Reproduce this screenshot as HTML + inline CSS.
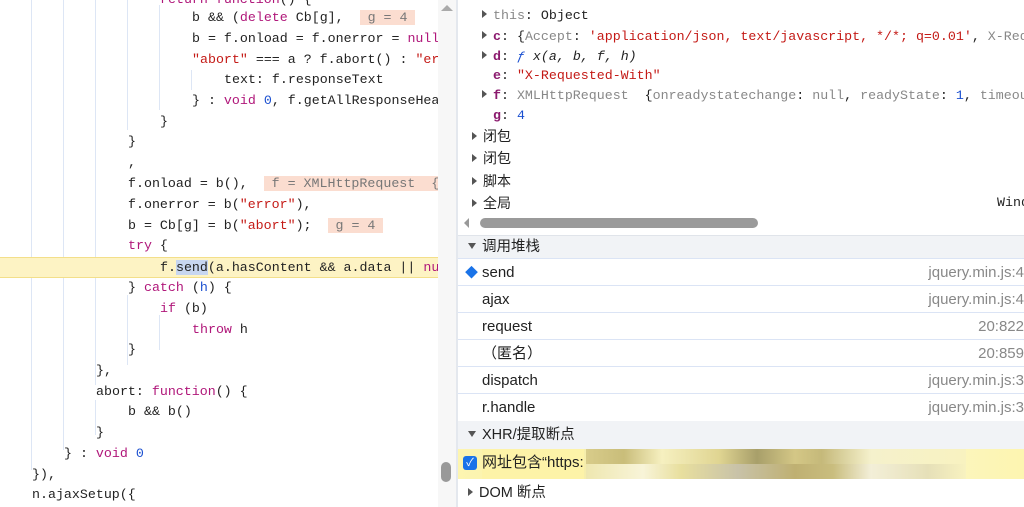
<!DOCTYPE html><html><head><meta charset="utf-8"><style>
*{margin:0;padding:0;box-sizing:border-box}
body{width:1024px;height:507px;overflow:hidden;background:#fff;position:relative;font-family:"Liberation Sans","Noto Sans CJK SC",sans-serif}
#code{position:absolute;left:0;top:0;width:438px;height:507px;overflow:hidden;font-family:"Liberation Mono","Noto Sans CJK SC",monospace;font-size:13.3px;color:#222}
.l{position:absolute;left:0;height:20.7px;line-height:20.7px;white-space:pre;width:438px}
.g{position:absolute;width:1px;background:#dde6f5}
.k{color:#b0177a}.s{color:#c41a16}.n{color:#1a4fd0}
.hl{background:#fbddd0;color:#777}
#gut{position:absolute;left:438px;top:0;width:18px;height:507px;background:#f7f7f7}
#div{position:absolute;left:456px;top:0;width:2px;height:507px;background:#e4e8ee}
#r{position:absolute;left:458px;top:0;width:566px;height:507px;font-size:14px;color:#222}
.sc{position:absolute;white-space:pre;font-family:"Liberation Mono","Noto Sans CJK SC",monospace;font-size:13.3px;line-height:20px}
.tri{display:inline-block;width:0;height:0;border-top:4px solid transparent;border-bottom:4px solid transparent;border-left:5px solid #555;margin-right:6px;vertical-align:1px}
.trd{display:inline-block;width:0;height:0;border-left:4px solid transparent;border-right:4px solid transparent;border-top:6px solid #555;margin-right:6px;vertical-align:2px}
.p{color:#8b1a6e;font-weight:bold}.gr{color:#888}
.row{position:absolute;left:0;width:566px;height:27px;line-height:28px;border-bottom:1px solid #dbe4f5;padding-left:24px;font-size:15px}
.row .f{position:absolute;right:0;color:#888}
.hdr{position:absolute;left:0;width:566px;background:#f1f3f6;padding-left:10px;font-size:14.5px}
</style></head><body>
<div id="code">
<div class="g" style="left:31px;top:0;height:470px"></div>
<div class="g" style="left:63px;top:0;height:450px"></div>
<div class="g" style="left:95px;top:0;height:385px"></div>
<div class="g" style="left:95px;top:400px;height:35px"></div>
<div class="g" style="left:127px;top:0;height:130px"></div>
<div class="g" style="left:127px;top:295px;height:70px"></div>
<div class="g" style="left:159px;top:5px;height:105px"></div>
<div class="g" style="left:159px;top:315px;height:35px"></div>
<div class="g" style="left:191px;top:70px;height:20px"></div>
<div class="l" style="top:-10px;left:160px"><span class="k">return function</span>() {</div>
<div class="l" style="top:8px;left:192px">b &amp;&amp; (<span class="k">delete</span> Cb[g],  <span class="hl"> g = 4 </span></div>
<div class="l" style="top:29px;left:192px">b = f.onload = f.onerror = <span class="k">null</span></div>
<div class="l" style="top:50px;left:192px"><span class="s">"abort"</span> === a ? f.abort() : <span class="s">"er</span></div>
<div class="l" style="top:70px;left:224px">text: f.responseText</div>
<div class="l" style="top:91px;left:192px">} : <span class="k">void</span> <span class="n">0</span>, f.getAllResponseHea</div>
<div class="l" style="top:112px;left:160px">}</div>
<div class="l" style="top:132px;left:128px">}</div>
<div class="l" style="top:153px;left:128px">,</div>
<div class="l" style="top:174px;left:128px">f.onload = b(),  <span class="hl"> f = XMLHttpRequest  {o</span></div>
<div class="l" style="top:195px;left:128px">f.onerror = b(<span class="s">"error"</span>),</div>
<div class="l" style="top:216px;left:128px">b = Cb[g] = b(<span class="s">"abort"</span>);  <span class="hl"> g = 4 </span></div>
<div class="l" style="top:236px;left:128px"><span class="k">try</span> {</div>
<div class="l" style="top:257px;left:0;background:#fdf3c4;border-top:1px solid #f3df8a;border-bottom:1px solid #f3df8a;padding-left:160px">f.<span style="background:#c7d6f0">send</span>(a.hasContent &amp;&amp; a.data || <span class="k">nu</span></div>
<div class="l" style="top:278px;left:128px">} <span class="k">catch</span> (<span class="n">h</span>) {</div>
<div class="l" style="top:299px;left:160px"><span class="k">if</span> (b)</div>
<div class="l" style="top:320px;left:192px"><span class="k">throw</span> h</div>
<div class="l" style="top:340px;left:128px">}</div>
<div class="l" style="top:361px;left:96px">},</div>
<div class="l" style="top:382px;left:96px">abort: <span class="k">function</span>() {</div>
<div class="l" style="top:402px;left:128px">b &amp;&amp; b()</div>
<div class="l" style="top:423px;left:96px">}</div>
<div class="l" style="top:444px;left:64px">} : <span class="k">void</span> <span class="n">0</span></div>
<div class="l" style="top:465px;left:32px">}),</div>
<div class="l" style="top:485px;left:32px">n.ajaxSetup({</div>
</div>
<div id="gut">
<div style="position:absolute;left:3px;top:5px;width:0;height:0;border-left:6px solid transparent;border-right:6px solid transparent;border-bottom:6px solid #aaa"></div>
<div style="position:absolute;left:3px;top:462px;width:10px;height:20px;border-radius:5px;background:#999"></div>
</div>
<div id="div"></div>
<div id="r">
<div class="sc" style="left:24px;top:6px"><span class="tri"></span><span class="gr">this</span>: Object</div>
<div class="sc" style="left:24px;top:27px"><span class="tri"></span><span class="p">c</span>: {<span class="gr">Accept</span>: <span class="s">'application/json, text/javascript, */*; q=0.01'</span>, <span class="gr">X-Req</span></div>
<div class="sc" style="left:24px;top:47px"><span class="tri"></span><span class="p">d</span>: <i><span class="n">ƒ</span> x(a, b, f, h)</i></div>
<div class="sc" style="left:35px;top:66px"><span class="p">e</span>: <span class="s">"X-Requested-With"</span></div>
<div class="sc" style="left:24px;top:86px"><span class="tri"></span><span class="p">f</span>: <span class="gr">XMLHttpRequest  </span>{<span class="gr">onreadystatechange</span>: <span class="gr">null</span>, <span class="gr">readyState</span>: <span class="n">1</span>, <span class="gr">timeou</span></div>
<div class="sc" style="left:35px;top:106px"><span class="p">g</span>: <span class="n">4</span></div>
<div class="sc" style="left:14px;top:126px;font-family:'Noto Sans CJK SC',sans-serif;font-size:14px"><span class="tri"></span>闭包</div>
<div class="sc" style="left:14px;top:148px;font-family:'Noto Sans CJK SC',sans-serif;font-size:14px"><span class="tri"></span>闭包</div>
<div class="sc" style="left:14px;top:171px;font-family:'Noto Sans CJK SC',sans-serif;font-size:14px"><span class="tri"></span>脚本</div>
<div class="sc" style="left:14px;top:193px;font-family:'Noto Sans CJK SC',sans-serif;font-size:14px"><span class="tri"></span>全局</div>
<div class="sc" style="left:539px;top:193px">Wind</div>
<div style="position:absolute;left:6px;top:218px;width:0;height:0;border-top:5px solid transparent;border-bottom:5px solid transparent;border-right:5px solid #999"></div>
<div style="position:absolute;left:22px;top:218px;width:278px;height:10px;border-radius:5px;background:#9a9a9a"></div>
<div class="hdr" style="top:235px;height:24px;line-height:23px;border-top:1px solid #e0e4ea;border-bottom:1px solid #dbe4f5"><span class="trd"></span>调用堆栈</div>
<div class="row" style="top:259px"><span style="position:absolute;left:7px;top:0;color:#1a73e8;font-size:13px">◆</span>send<span class="f">jquery.min.js:4</span></div>
<div class="row" style="top:286px">ajax<span class="f">jquery.min.js:4</span></div>
<div class="row" style="top:313px">request<span class="f">20:822</span></div>
<div class="row" style="top:340px">（匿名）<span class="f">20:859</span></div>
<div class="row" style="top:367px">dispatch<span class="f">jquery.min.js:3</span></div>
<div class="row" style="top:394px;border-bottom:none">r.handle<span class="f">jquery.min.js:3</span></div>
<div class="hdr" style="top:421px;height:28px;line-height:28px"><span class="trd"></span>XHR/提取断点</div>
<div style="position:absolute;left:0;top:449px;width:566px;height:30px;background:linear-gradient(90deg,#fdf5b0 0,#f1e9a8 40%,#faf6d0 70%,#fdf5b0 100%)"></div>
<div style="position:absolute;left:128px;top:449px;width:380px;height:30px;display:flex;flex-wrap:wrap">
<div style="width:100%;height:15px;background:linear-gradient(90deg,#d8cc8a,#c9bd7a 10%,#f6f0c0 20%,#e0d592 35%,#a89f6a 45%,#d4c786 55%,#c5b97a 62%,#f5f1cc 75%,#f8f2c0 100%)"></div>
<div style="width:100%;height:15px;background:linear-gradient(90deg,#eee7b0,#f8f4d8 15%,#e8df9e 25%,#c8c2a8 40%,#bfb072 55%,#c9bd7e 65%,#f3efd8 75%,#e6e0b8 90%,#f8f2c0 100%)"></div>
</div>
<div style="position:absolute;left:5px;top:456px;width:14px;height:14px;border-radius:3px;background:#1a73e8;color:#fff;font-size:11px;line-height:14px;text-align:center">✓</div>
<div style="position:absolute;left:24px;top:449px;height:30px;line-height:28px;font-size:15px;background:#fdf3a8">网址包含“https:</div>
<div class="hdr" style="top:479px;height:28px;line-height:28px;background:#fff"><span class="tri"></span>DOM 断点</div>
</div>
</body></html>
